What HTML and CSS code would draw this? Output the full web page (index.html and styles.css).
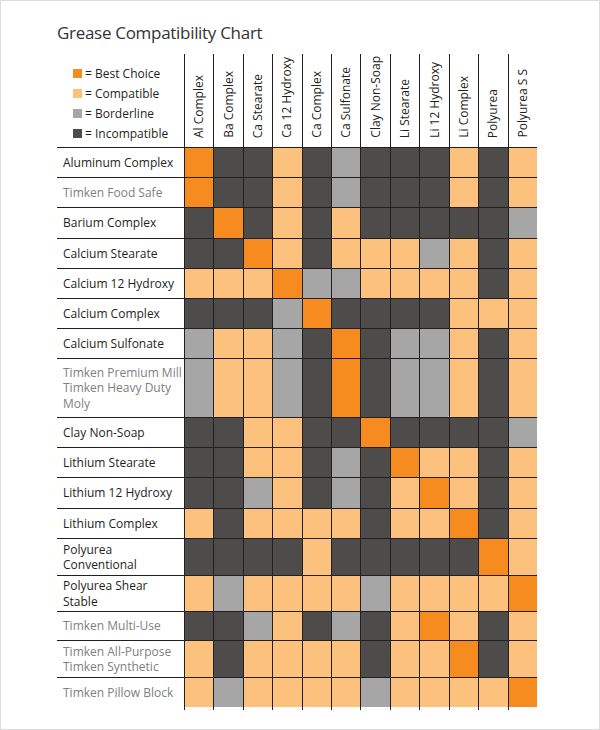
FILE: index.html
```html
<!DOCTYPE html>
<html>
<head>
<meta charset="utf-8">
<title>Grease Compatibility Chart</title>
<link rel="stylesheet" href="styles.css">
</head>
<body>
<div class="page">
  <h1 class="title">Grease Compatibility Chart</h1>
  <div class="chart">
    <div class="row head">
      <div class="legend">
        <div class="li"><span class="sw b"></span>= Best Choice</div>
        <div class="li"><span class="sw c"></span>= Compatible</div>
        <div class="li"><span class="sw g"></span>= Borderline</div>
        <div class="li"><span class="sw i"></span>= Incompatible</div>
      </div>
      <div class="hc"><span>Al Complex</span></div>
      <div class="hc"><span>Ba Complex</span></div>
      <div class="hc"><span>Ca Stearate</span></div>
      <div class="hc"><span>Ca 12 Hydroxy</span></div>
      <div class="hc"><span>Ca Complex</span></div>
      <div class="hc"><span>Ca Sulfonate</span></div>
      <div class="hc"><span>Clay Non-Soap</span></div>
      <div class="hc"><span>Li Stearate</span></div>
      <div class="hc"><span>Li 12 Hydroxy</span></div>
      <div class="hc"><span>Li Complex</span></div>
      <div class="hc"><span>Polyurea</span></div>
      <div class="hc"><span>Polyurea S S</span></div>
    </div>

    <div class="row">
      <div class="lbl">Aluminum Complex</div>
      <div class="k b"></div><div class="k i"></div><div class="k i"></div><div class="k c"></div><div class="k i"></div><div class="k g"></div><div class="k i"></div><div class="k i"></div><div class="k i"></div><div class="k c"></div><div class="k i"></div><div class="k c"></div>
    </div>
    <div class="row">
      <div class="lbl tk">Timken Food Safe</div>
      <div class="k b"></div><div class="k i"></div><div class="k i"></div><div class="k c"></div><div class="k i"></div><div class="k g"></div><div class="k i"></div><div class="k i"></div><div class="k i"></div><div class="k c"></div><div class="k i"></div><div class="k c"></div>
    </div>
    <div class="row tall">
      <div class="lbl">Barium Complex</div>
      <div class="k i"></div><div class="k b"></div><div class="k i"></div><div class="k c"></div><div class="k i"></div><div class="k c"></div><div class="k i"></div><div class="k i"></div><div class="k i"></div><div class="k i"></div><div class="k i"></div><div class="k g"></div>
    </div>
    <div class="row">
      <div class="lbl">Calcium Stearate</div>
      <div class="k i"></div><div class="k i"></div><div class="k b"></div><div class="k c"></div><div class="k i"></div><div class="k c"></div><div class="k c"></div><div class="k c"></div><div class="k g"></div><div class="k c"></div><div class="k i"></div><div class="k c"></div>
    </div>
    <div class="row">
      <div class="lbl">Calcium 12 Hydroxy</div>
      <div class="k c"></div><div class="k c"></div><div class="k c"></div><div class="k b"></div><div class="k g"></div><div class="k g"></div><div class="k c"></div><div class="k c"></div><div class="k c"></div><div class="k c"></div><div class="k i"></div><div class="k c"></div>
    </div>
    <div class="row">
      <div class="lbl">Calcium Complex</div>
      <div class="k i"></div><div class="k i"></div><div class="k i"></div><div class="k g"></div><div class="k b"></div><div class="k i"></div><div class="k i"></div><div class="k i"></div><div class="k i"></div><div class="k c"></div><div class="k c"></div><div class="k c"></div>
    </div>
    <div class="row">
      <div class="lbl">Calcium Sulfonate</div>
      <div class="k g"></div><div class="k c"></div><div class="k c"></div><div class="k g"></div><div class="k i"></div><div class="k b"></div><div class="k i"></div><div class="k g"></div><div class="k g"></div><div class="k c"></div><div class="k i"></div><div class="k c"></div>
    </div>
    <div class="row h3">
      <div class="lbl tk">Timken Premium Mill<br>Timken Heavy Duty<br>Moly</div>
      <div class="k g"></div><div class="k c"></div><div class="k c"></div><div class="k g"></div><div class="k i"></div><div class="k b"></div><div class="k i"></div><div class="k g"></div><div class="k g"></div><div class="k c"></div><div class="k i"></div><div class="k c"></div>
    </div>
    <div class="row">
      <div class="lbl">Clay Non-Soap</div>
      <div class="k i"></div><div class="k i"></div><div class="k c"></div><div class="k c"></div><div class="k i"></div><div class="k i"></div><div class="k b"></div><div class="k i"></div><div class="k i"></div><div class="k i"></div><div class="k i"></div><div class="k g"></div>
    </div>
    <div class="row">
      <div class="lbl">Lithium Stearate</div>
      <div class="k i"></div><div class="k i"></div><div class="k c"></div><div class="k c"></div><div class="k i"></div><div class="k g"></div><div class="k i"></div><div class="k b"></div><div class="k c"></div><div class="k c"></div><div class="k i"></div><div class="k c"></div>
    </div>
    <div class="row tall">
      <div class="lbl">Lithium 12 Hydroxy</div>
      <div class="k i"></div><div class="k i"></div><div class="k g"></div><div class="k c"></div><div class="k i"></div><div class="k g"></div><div class="k i"></div><div class="k c"></div><div class="k b"></div><div class="k c"></div><div class="k i"></div><div class="k c"></div>
    </div>
    <div class="row">
      <div class="lbl">Lithium Complex</div>
      <div class="k c"></div><div class="k i"></div><div class="k c"></div><div class="k c"></div><div class="k c"></div><div class="k c"></div><div class="k i"></div><div class="k c"></div><div class="k c"></div><div class="k b"></div><div class="k i"></div><div class="k c"></div>
    </div>
    <div class="row h2">
      <div class="lbl">Polyurea<br>Conventional</div>
      <div class="k i"></div><div class="k i"></div><div class="k i"></div><div class="k i"></div><div class="k c"></div><div class="k i"></div><div class="k i"></div><div class="k i"></div><div class="k i"></div><div class="k i"></div><div class="k b"></div><div class="k c"></div>
    </div>
    <div class="row h2s">
      <div class="lbl">Polyurea Shear<br>Stable</div>
      <div class="k c"></div><div class="k g"></div><div class="k c"></div><div class="k c"></div><div class="k c"></div><div class="k c"></div><div class="k g"></div><div class="k c"></div><div class="k c"></div><div class="k c"></div><div class="k c"></div><div class="k b"></div>
    </div>
    <div class="row short">
      <div class="lbl tk">Timken Multi-Use</div>
      <div class="k i"></div><div class="k i"></div><div class="k g"></div><div class="k c"></div><div class="k i"></div><div class="k g"></div><div class="k i"></div><div class="k c"></div><div class="k b"></div><div class="k c"></div><div class="k i"></div><div class="k c"></div>
    </div>
    <div class="row h2">
      <div class="lbl tk">Timken All-Purpose<br>Timken Synthetic</div>
      <div class="k c"></div><div class="k i"></div><div class="k c"></div><div class="k c"></div><div class="k c"></div><div class="k c"></div><div class="k i"></div><div class="k c"></div><div class="k c"></div><div class="k b"></div><div class="k i"></div><div class="k c"></div>
    </div>
    <div class="row">
      <div class="lbl tk">Timken Pillow Block</div>
      <div class="k c"></div><div class="k g"></div><div class="k c"></div><div class="k c"></div><div class="k c"></div><div class="k c"></div><div class="k g"></div><div class="k c"></div><div class="k c"></div><div class="k c"></div><div class="k c"></div><div class="k b"></div>
    </div>
    <div class="row end">
      <div></div>
      <div class="t"></div><div class="t"></div><div class="t"></div><div class="t"></div><div class="t"></div><div class="t"></div><div class="t"></div><div class="t"></div><div class="t"></div><div class="t"></div><div class="t"></div><div class="t"></div>
    </div>
  </div>
</div>
</body>
</html>
```

FILE: styles.css
```css
* {
  box-sizing: border-box;
  margin: 0;
  padding: 0;
}

html, body {
  background: #ffffff;
}

body {
  font-family: "Open Sans", "Noto Sans", sans-serif;
  color: #231f20;
}

.page {
  width: 600px;
  height: 730px;
  border: 1px solid #dcdcdc;
  padding: 20px 0 0 56px;
}

.title {
  font-size: 17px;
  font-weight: 400;
  line-height: 24px;
  letter-spacing: -0.3px;
  color: #333333;
  margin-bottom: 9px;
}

.chart {
  width: 480px;
}

.row {
  display: grid;
  grid-template-columns: 127px repeat(12, 1fr);
  height: 30px;
}

.row.head { height: 93px; }
.row.tall { height: 31px; }
.row.short { height: 29px; }
.row.h2 { height: 37px; }
.row.h2s { height: 36px; }
.row.h3 { height: 59px; }
.row.end { height: 3px; }

.legend {
  padding: 9px 0 0 16px;
  font-size: 12px;
}

.li {
  display: flex;
  align-items: center;
  gap: 3px;
  height: 20px;
  white-space: nowrap;
}

.sw {
  width: 9px;
  height: 9px;
}

.hc {
  border-left: 1px solid #231f20;
  display: flex;
  justify-content: center;
  align-items: flex-end;
  padding-bottom: 9px;
}

.hc span {
  writing-mode: vertical-rl;
  transform: rotate(180deg);
  font-size: 12px;
  line-height: 16px;
  white-space: nowrap;
}

.lbl {
  border-top: 1px solid #231f20;
  padding-left: 6px;
  display: flex;
  align-items: center;
  font-size: 12px;
  line-height: 15.5px;
  color: #231f20;
}

.lbl.tk {
  color: #808080;
}

.k {
  border-top: 1px solid #231f20;
  border-left: 1px solid #231f20;
}

.t {
  border-left: 1px solid #231f20;
}

.b { background: #f68b1f; }
.c { background: #fbc17d; }
.g { background: #a6a6a6; }
.i { background: #4d4c4b; }
```
